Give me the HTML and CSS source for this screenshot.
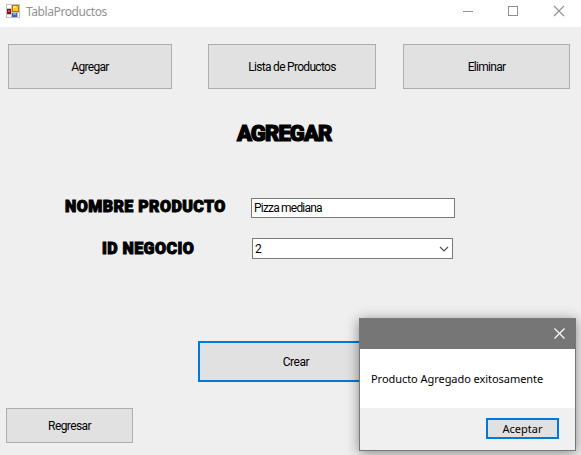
FILE: index.html
```
<!DOCTYPE html>
<html lang="es">
<head>
<meta charset="utf-8">
<title>TablaProductos</title>
<link rel="stylesheet" href="styles.css">
</head>
<body>
<div class="window">
  <header class="titlebar">
    <svg class="app-icon" width="14" height="14" viewBox="0 0 14 14" shape-rendering="crispEdges">
      <path fill="#c3c3c3" d="M0 0h14v14H0z"/>
      <path fill="#fff" d="M1 1h4v3H1zM1 11h4v2H1zM12 9h1v4h-1z"/>
      <path fill="#8e1414" d="M1 5h4v5H1z"/>
      <path fill="#d84a40" d="M2 6h2v2H2z"/>
      <path fill="#b87900" d="M6 1h7v7H6z"/>
      <path fill="#ffc928" d="M7 2h5v5H7z"/>
      <path fill="#ffe680" d="M7 2h3v2H7z"/>
      <path fill="#3567c5" d="M6 9h5v4H6z"/>
      <path fill="#78a5ef" d="M7 9h3v2H7z"/>
    </svg>
    <span class="title">TablaProductos</span>
    <svg class="controls" width="112" height="12" viewBox="0 0 112 12" fill="none" stroke="#929292">
      <path d="M1 6.5h10M46.5 1.5h9v9h-9z" shape-rendering="crispEdges"/>
      <path d="M92 1l10 10M102 1L92 11" stroke-width="1.1"/>
    </svg>
  </header>
  <main>
    <nav class="tabs">
      <button class="btn">Agregar</button>
      <button class="btn">Lista de Productos</button>
      <button class="btn">Eliminar</button>
    </nav>
    <h1>AGREGAR</h1>
    <form class="fields">
      <label class="l-nombre">NOMBRE PRODUCTO</label>
      <div class="field">Pizza mediana</div>
      <label class="l-id">ID NEGOCIO</label>
      <div class="field combo"><span>2</span>
        <svg width="10" height="6" viewBox="0 0 10 6" fill="none" stroke="#555" stroke-width="1.2"><path d="M1 1l4 4 4-4"/></svg>
      </div>
    </form>
    <button class="btn create">Crear</button>
    <button class="btn back">Regresar</button>
  </main>
  <section class="dialog">
    <div class="dialog-title">
      <svg width="11" height="11" viewBox="0 0 11 11" stroke="#fff" stroke-width="1.15"><path d="M.5.5l10 10M10.5.5l-10 10"/></svg>
    </div>
    <div class="dialog-body">Producto Agregado exitosamente</div>
    <div class="dialog-foot"><button class="btn accept">Aceptar</button></div>
  </section>
</div>
</body>
</html>
```
FILE: styles.css
```
* { box-sizing: border-box; }
body { margin: 0; font-family: Roboto, "Liberation Sans", sans-serif; font-size: 12px; color: #000; }
.window { position: relative; width: 581px; height: 455px; background: #efefef; overflow: hidden; }
.titlebar { display: flex; align-items: flex-start; height: 27px; background: #fff; padding: 4px 7px 0 6px; }
.title { margin-left: 6px; color: #929292; font: 12px/16px "Noto Sans", sans-serif; letter-spacing: -.42px; }
.controls { margin: 1px 0 0 auto; }
.titlebar .app-icon { flex: none; }
.tabs { display: grid; grid-template-columns: 164px 168px 167px; column-gap: 36px; padding: 17px 0 0 8px; }
.tabs .btn { height: 45px; }
.tabs .btn:last-child { margin-left: -9px; width: 167px; }
.btn { display: flex; align-items: center; justify-content: center; margin: 0; padding: 0; border: 1px solid #adadad; border-radius: 0; background: #e1e1e1; font: inherit; letter-spacing: -.7px; color: #000; white-space: nowrap; }
h1 { margin: 31px 0 0 237px; font: 900 22px/28px Roboto, sans-serif; letter-spacing: -.9px; white-space: nowrap; -webkit-text-stroke: 1.2px #000; }
.fields { display: grid; grid-template-columns: 251px 204px; grid-template-rows: 20px 21px; row-gap: 20px; margin-top: 50px; }
.fields label { font: 900 16px/18px Roboto, sans-serif; letter-spacing: .45px; white-space: nowrap; -webkit-text-stroke: 1px #000; }
.l-nombre { padding-left: 65px; }
.fields .l-id { padding-left: 102px; padding-top: 2px; }
.field { display: flex; align-items: center; border: 1px solid #7a7a7a; background: #fff; padding: 0 3px 0 2px; letter-spacing: -.8px; }
.combo { width: 201px; margin-left: 1px; justify-content: space-between; }
.create { width: 196px; height: 41px; margin: 82px 0 0 198px; border: 2px solid #0078d7; letter-spacing: -.45px; }
.back { width: 127px; height: 35px; margin: 26px 0 0 6px; letter-spacing: -.6px; }
.dialog { position: absolute; left: 359px; top: 318px; width: 217px; height: 133px; border: 1px solid #777; background: #fff; box-shadow: 0 2px 12px rgba(0,0,0,.45); font-family: "Noto Sans", sans-serif; font-size: 11px; }
.dialog-title { height: 30px; background: #767676; display: flex; justify-content: flex-end; padding: 9px 10px 0 0; }
.dialog-body { height: 59px; display: flex; align-items: center; padding-left: 11px; white-space: nowrap; letter-spacing: -.05px; }
.dialog-foot { height: 42px; background: #f0f0f0; display: flex; justify-content: flex-end; padding: 10px 16px 0 0; }
.accept { width: 73px; height: 21px; border: 2px solid #0078d7; font-size: 11px; letter-spacing: 0; }
```
